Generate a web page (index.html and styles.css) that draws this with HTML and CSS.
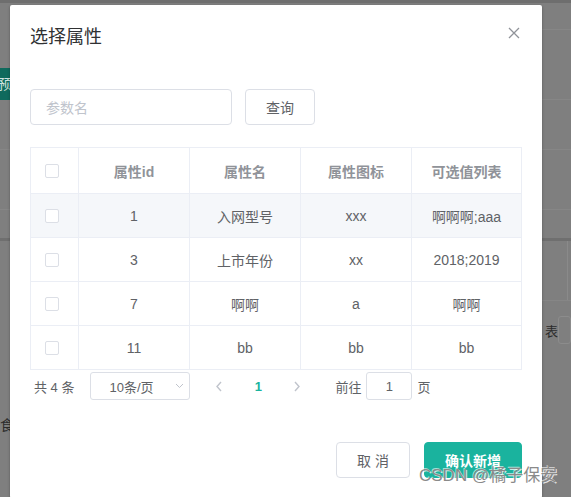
FILE: index.html
```html
<!DOCTYPE html>
<html lang="zh">
<head>
<meta charset="utf-8">
<title>选择属性</title>
<link rel="stylesheet" href="styles.css">
</head>
<body>
<div class="page">
  <div class="page-top"></div>
  <div class="page-cols">
    <div class="bg-left">
      <div class="bl-gap1"></div>
      <div class="bl-btn"><span>预</span></div>
      <div class="bl-row h49"></div>
      <div class="bl-row h59"></div>
      <div class="bl-row h30 dark"></div>
      <div class="bl-text">食</div>
    </div>
    <div class="bg-mid"></div>
    <div class="bg-right">
      <div class="br-row h26"></div>
      <div class="br-row h69"></div>
      <div class="br-row h49"></div>
      <div class="br-row h59"></div>
      <div class="br-row h30 dark"></div>
      <div class="br-split"><div class="br-cell"></div></div>
      <div class="br-form"><span class="br-label">表</span><span class="br-input"></span></div>
    </div>
  </div>
</div>

<div class="overlay">
  <div class="dialog">
    <div class="dialog-header">
      <span class="dialog-title">选择属性</span>
      <button class="dialog-close" type="button" aria-label="关闭">
        <svg width="16" height="16" viewBox="0 0 16 16"><path d="M3 3 L13 13 M13 3 L3 13" stroke="#909399" stroke-width="1.3" fill="none"/></svg>
      </button>
    </div>
    <div class="dialog-body">
      <div class="search-row">
        <div class="input"><span class="placeholder">参数名</span></div>
        <button class="btn btn-plain" type="button">查询</button>
      </div>

      <div class="table">
        <div class="tr th">
          <div class="td td-check"><span class="checkbox"></span></div>
          <div class="td">属性id</div>
          <div class="td">属性名</div>
          <div class="td">属性图标</div>
          <div class="td">可选值列表</div>
        </div>
        <div class="tr hover">
          <div class="td td-check"><span class="checkbox"></span></div>
          <div class="td">1</div>
          <div class="td">入网型号</div>
          <div class="td">xxx</div>
          <div class="td">啊啊啊;aaa</div>
        </div>
        <div class="tr">
          <div class="td td-check"><span class="checkbox"></span></div>
          <div class="td">3</div>
          <div class="td">上市年份</div>
          <div class="td">xx</div>
          <div class="td">2018;2019</div>
        </div>
        <div class="tr">
          <div class="td td-check"><span class="checkbox"></span></div>
          <div class="td">7</div>
          <div class="td">啊啊</div>
          <div class="td">a</div>
          <div class="td">啊啊</div>
        </div>
        <div class="tr">
          <div class="td td-check"><span class="checkbox"></span></div>
          <div class="td">11</div>
          <div class="td">bb</div>
          <div class="td">bb</div>
          <div class="td">bb</div>
        </div>
      </div>

      <div class="pagination">
        <span class="total">共 4 条</span>
        <div class="sizes">
          <span class="sizes-text">10条/页</span>
          <svg class="sizes-arrow" width="9" height="6" viewBox="0 0 9 6"><path d="M1 1 L4.5 4.5 L8 1" stroke="#c0c4cc" stroke-width="1" fill="none"/></svg>
        </div>
        <span class="pg-btn pg-prev">
          <svg width="8" height="11" viewBox="0 0 8 11"><path d="M6 1 L2 5.5 L6 10" stroke="#c0c4cc" stroke-width="1.4" fill="none"/></svg>
        </span>
        <span class="pg-num">1</span>
        <span class="pg-btn pg-next">
          <svg width="8" height="11" viewBox="0 0 8 11"><path d="M2 1 L6 5.5 L2 10" stroke="#c0c4cc" stroke-width="1.4" fill="none"/></svg>
        </span>
        <span class="jump">前往</span>
        <span class="jump-input">1</span>
        <span class="jump-suffix">页</span>
      </div>
    </div>
    <div class="dialog-footer">
      <button class="btn btn-cancel" type="button">取 消</button>
      <button class="btn btn-primary" type="button">确认新增</button>
    </div>
  </div>
</div>

<div class="watermark">CSDN @橘子保安</div>
</body>
</html>
```

FILE: styles.css
```css
* { box-sizing: border-box; }
html, body { margin: 0; padding: 0; }
body {
  width: 571px;
  height: 497px;
  overflow: hidden;
  font-family: "Liberation Sans", "Noto Sans CJK SC", sans-serif;
  background: #7f7f7f;
  position: relative;
}

/* background page (already dimmed) */
.page { position: absolute; inset: 0; display: flex; flex-direction: column; background: #7f7f7f; }
.page-top { height: 3px; background: #6e6e6e; }
.page-cols { flex: 1; display: grid; grid-template-columns: 10px 1fr 29px; }
.bg-left, .bg-right { display: flex; flex-direction: column; overflow: hidden; }
.bl-gap1 { height: 65px; }
.bl-btn { height: 32px; background: #0f6a5d; color: #cfe3df; font-size: 14px; line-height: 32px; display: flex; justify-content: flex-end; overflow: hidden; }
.bl-btn span { margin-right: -2px; }
.bl-row { border-bottom: 1px solid #868686; }
.bl-row.dark, .br-row.dark { border-bottom: 3px solid #6f6f6f; }
.h26 { height: 27px; }
.h30 { height: 31px; }
.h49 { height: 50px; }
.h59 { height: 60px; }
.h69 { height: 70px; }
.bl-text { margin-top: 173px; font-size: 14px; color: #2c2c2c; display: flex; justify-content: flex-end; margin-right: -4px; }
.br-row { border-bottom: 1px solid #868686; }
.br-split { height: 60px; border-bottom: 1px solid #868686; display: flex; }
.br-cell { width: 26px; border-right: 1px solid #8a8a8a; }
.br-form { display: flex; align-items: center; margin-top: 15px; padding-left: 3px; }
.br-label { font-size: 13px; color: #2c2c2c; width: 18px; }
.br-input { width: 20px; height: 28px; border: 1px solid #8c8c8c; border-radius: 3px; }

/* overlay + dialog */
.overlay { position: absolute; inset: 0; }
.dialog {
  margin: 5px 0 0 10px;
  width: 532px;
  background: #fff;
  border-radius: 2px;
  box-shadow: 0 1px 3px rgba(0,0,0,.3);
  position: relative;
}
.dialog-header { padding: 20px 20px 10px; position: relative; }
.dialog-title { font-size: 18px; line-height: 24px; color: #303133; display: block; }
.dialog-close {
  position: absolute; top: 20px; right: 20px;
  width: 16px; height: 16px; padding: 0; border: 0; background: none;
  display: flex;
}
.dialog-body { padding: 30px 20px 0; }

.search-row { display: flex; gap: 13px; margin-bottom: 22px; }
.input {
  width: 202px; height: 36px;
  border: 1px solid #dcdfe6; border-radius: 4px;
  padding-left: 15px; display: flex; align-items: center;
}
.placeholder { font-size: 14px; color: #c0c4cc; }
.btn {
  font-family: inherit; font-size: 14px; border-radius: 4px;
  height: 36px; padding: 0 20px; cursor: pointer;
}
.btn-plain { width: 70px; padding: 0; background: #fff; border: 1px solid #dcdfe6; color: #606266; }

.table { border-top: 1px solid #ebeef5; border-left: 1px solid #ebeef5; width: 492px; }
.tr { display: grid; grid-template-columns: 48px 111px 111px 111px 110px; height: 44px; }
.tr.th { height: 46px; }
.tr.hover { background: #f5f7fa; }
.td {
  border-right: 1px solid #ebeef5; border-bottom: 1px solid #ebeef5;
  display: flex; align-items: center; justify-content: center;
  font-size: 14px; color: #606266;
}
.th .td { color: #909399; font-weight: bold; }
.td-check { justify-content: flex-start; padding-left: 14px; }
.checkbox { width: 14px; height: 14px; border: 1px solid #dcdfe6; border-radius: 2px; background: #fff; }

.pagination {
  margin-top: 2px; height: 28px; display: flex; align-items: center;
  padding-left: 4px; font-size: 13px; color: #606266;
}
.total { margin-right: 16px; }
.sizes {
  width: 100px; height: 28px; border: 1px solid #dcdfe6; border-radius: 3px;
  display: flex; align-items: center; padding-left: 18px; position: relative;
}
.sizes-text { font-size: 13px; color: #606266; }
.sizes-arrow { position: absolute; left: 84px; top: 10px; }
.pg-btn { width: 30px; height: 28px; display: flex; align-items: center; justify-content: center; }
.pg-prev { margin-left: 14px; }
.pg-num { width: 30px; margin-left: 9px; text-align: center; color: #1ab39e; font-weight: bold; font-size: 13px; }
.pg-next { margin-left: 9px; }
.jump { margin-left: 23px; }
.jump-input {
  margin-left: 5px; width: 46px; height: 28px; border: 1px solid #dcdfe6; border-radius: 3px;
  display: flex; align-items: center; justify-content: center; color: #606266;
}
.jump-suffix { margin-left: 5px; }

.dialog-footer { display: flex; justify-content: flex-end; gap: 14px; padding: 42px 20px 20px; }
.btn-cancel { width: 74px; padding: 0; background: #fff; border: 1px solid #dcdfe6; color: #606266; }
.btn-primary { width: 98px; padding: 0; background: #1ab39e; border: 1px solid #1ab39e; color: #fff; font-weight: bold; }

.watermark {
  position: absolute; left: 419px; top: 465px;
  font-size: 17px; line-height: 22px; color: #8a8a8a;
  font-family: "Liberation Sans", "Noto Sans CJK SC", sans-serif;
  text-shadow: 1px 1px 0 rgba(255,255,255,.8), -1px -1px 0 rgba(255,255,255,.6);
  white-space: nowrap;
}
```
